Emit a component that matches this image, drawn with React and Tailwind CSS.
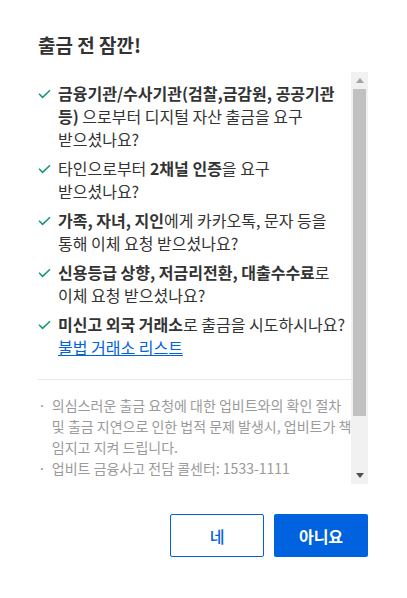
const font = { fontFamily: '"Noto Sans CJK KR", "Noto Sans", sans-serif' };

function CheckMark() {
  return (
    <svg width="13" height="10" viewBox="0 0 13 10" className="shrink-0 mt-[7px]">
      <path d="M1 4.8 4.6 8.4 12 1.2" fill="none" stroke="#13967a" strokeWidth="1.5" />
    </svg>
  );
}

function Item({ children }) {
  return (
    <li className="flex gap-[7px] mb-[6px]">
      <CheckMark />
      <p className="text-[16px] leading-[23px] text-[#333] whitespace-nowrap">{children}</p>
    </li>
  );
}

function FakeScrollbar() {
  return (
    <div className="w-[17px] shrink-0 bg-[#f1f1f1] flex flex-col items-center">
      <div className="h-[17px] flex items-center justify-center">
        <svg width="8" height="5" viewBox="0 0 8 5">
          <path d="M0 5 4 0 8 5Z" fill="#a3a3a3" />
        </svg>
      </div>
      <div className="w-[13px] h-[327px] bg-[#c1c1c1]" />
      <div className="flex-1" />
      <div className="h-[17px] flex items-center justify-center">
        <svg width="8" height="5" viewBox="0 0 8 5">
          <path d="M0 0 4 5 8 0Z" fill="#505050" />
        </svg>
      </div>
    </div>
  );
}

export default function App() {
  return (
    <div className="w-[407px] h-[598px] bg-white pt-[33px] pl-[38px] pr-[39px]" style={font}>
      <h2 className="text-[19px] leading-[24px] font-bold text-[#333]">출금 전 잠깐!</h2>

      <div className="mt-[15px] h-[412px] flex">
        <div className="flex-1 overflow-hidden pt-[10px]">
          <ul>
            <Item>
              <b>금융기관/수사기관(검찰,금감원, 공공기관</b>
              <br />
              <b>등)</b> 으로부터 디지털 자산 출금을 요구
              <br />
              받으셨나요?
            </Item>
            <Item>
              타인으로부터 <b>2채널 인증</b>을 요구
              <br />
              받으셨나요?
            </Item>
            <Item>
              <b>가족, 자녀, 지인</b>에게 카카오톡, 문자 등을
              <br />
              통해 이체 요청 받으셨나요?
            </Item>
            <Item>
              <b>신용등급 상향, 저금리전환, 대출수수료</b>로
              <br />
              이체 요청 받으셨나요?
            </Item>
            <Item>
              <b>미신고 외국 거래소</b>로 출금을 시도하시나요?
              <br />
              <a className="text-[#0062df] underline">불법 거래소 리스트</a>
            </Item>
          </ul>

          <div className="mt-[20px] border-t border-[#e8e8e8] pt-[15px]">
            <ul className="text-[14px] leading-[21px] text-[#9a9a9a]">
              <li className="flex gap-[6px] whitespace-nowrap">
                <span>·</span>
                <span>
                  의심스러운 출금 요청에 대한 업비트와의 확인 절차
                  <br />
                  및 출금 지연으로 인한 법적 문제 발생시, 업비트가 책
                  <br />
                  임지고 지켜 드립니다.
                </span>
              </li>
              <li className="flex gap-[6px] whitespace-nowrap">
                <span>·</span>
                <span>업비트 금융사고 전담 콜센터: 1533-1111</span>
              </li>
            </ul>
          </div>
        </div>
        <FakeScrollbar />
      </div>

      <div className="mt-[30px] flex justify-end gap-[10px]">
        <button className="w-[94px] h-[43px] border border-[#0062df] rounded-[2px] text-[16px] text-[#0062df] font-medium">
          네
        </button>
        <button className="w-[94px] h-[43px] bg-[#0062df] rounded-[2px] text-[16px] text-white font-bold">
          아니요
        </button>
      </div>
    </div>
  );
}
